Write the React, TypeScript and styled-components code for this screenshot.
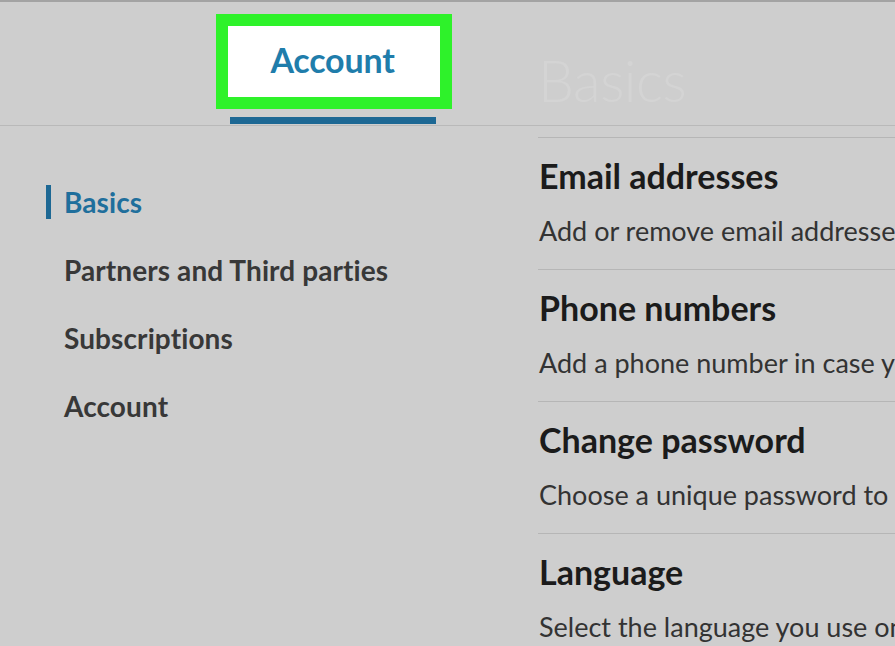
import React from 'react';
import styled, { createGlobalStyle } from 'styled-components';

const GlobalStyle = createGlobalStyle`
  html, body {
    margin: 0;
    padding: 0;
    background: #cecece;
    overflow: hidden;
  }
  body {
    font-family: Lato, "Liberation Sans", sans-serif;
  }
`;

const Page = styled.div`
  width: 895px;
  height: 646px;
  border-top: 2px solid #a3a3a3;
  box-sizing: border-box;
  overflow: hidden;
`;

const Header = styled.div`
  display: grid;
  grid-template-columns: 538px 1fr;
  height: 123px;
  border-bottom: 1px solid #b9b9b9;
`;

const TabCell = styled.div`
  padding: 12px 0 0 216px;
`;

const TabWrap = styled.div`
  width: 236px;
  display: flex;
  flex-direction: column;
`;

const Highlight = styled.div`
  box-sizing: border-box;
  width: 236px;
  height: 95px;
  border: 12px solid #2ef22a;
  background: #ffffff;
  display: flex;
  align-items: center;
  justify-content: center;
  padding: 0 3px 4px 0;
`;

const TabLabel = styled.span`
  font-size: 34px;
  font-weight: 700;
  color: #1f7dab;
  letter-spacing: -0.2px;
`;

const TabUnderline = styled.div`
  margin: 8px 0 0 14px;
  width: 206px;
  height: 7px;
  background: #1d6894;
`;

const PageTitle = styled.h1`
  margin: 0;
  padding: 50px 0 0 0;
  font-size: 57px;
  font-weight: 300;
  color: #d4d4d4;
  line-height: 1;
  letter-spacing: -0.5px;
`;

const Body = styled.div`
  display: grid;
  grid-template-columns: 538px 1fr;
`;

const Nav = styled.nav`
  display: flex;
  flex-direction: column;
  padding-top: 59px;
`;

const NavItem = styled.div<{ $active?: boolean }>`
  margin-left: 46px;
  margin-bottom: 34px;
  padding-left: 13px;
  height: 34px;
  display: flex;
  align-items: center;
  border-left: 5px solid ${p => (p.$active ? '#1d6894' : 'transparent')};
  font-size: 28px;
  font-weight: 700;
  color: ${p => (p.$active ? '#1f6f9c' : '#383838')};
  white-space: nowrap;
  letter-spacing: 0.1px;
`;

const Content = styled.div`
  padding-top: 11px;
`;

const Section = styled.section`
  border-top: 1px solid #b6b6b6;
  padding: 20px 0 22px 1px;
`;

const SectionTitle = styled.h2`
  margin: 0;
  font-size: 34px;
  line-height: 36px;
  font-weight: 700;
  color: #1b1b1b;
  white-space: nowrap;
`;

const SectionText = styled.p`
  margin: 21px 0 0;
  font-size: 27px;
  line-height: 32px;
  font-weight: 400;
  color: #333333;
  white-space: nowrap;
`;

const navItems = ['Basics', 'Partners and Third parties', 'Subscriptions', 'Account'];

const sections = [
  { title: 'Email addresses', text: 'Add or remove email addresses' },
  { title: 'Phone numbers', text: 'Add a phone number in case you' },
  { title: 'Change password', text: 'Choose a unique password to protect' },
  { title: 'Language', text: 'Select the language you use on' },
];

export default function App() {
  return (
    <Page>
      <GlobalStyle />
      <Header>
        <TabCell>
          <TabWrap>
            <Highlight>
              <TabLabel>Account</TabLabel>
            </Highlight>
            <TabUnderline />
          </TabWrap>
        </TabCell>
        <PageTitle>Basics</PageTitle>
      </Header>
      <Body>
        <Nav>
          {navItems.map((item, i) => (
            <NavItem key={item} $active={i === 0}>
              {item}
            </NavItem>
          ))}
        </Nav>
        <Content>
          {sections.map(s => (
            <Section key={s.title}>
              <SectionTitle>{s.title}</SectionTitle>
              <SectionText>{s.text}</SectionText>
            </Section>
          ))}
        </Content>
      </Body>
    </Page>
  );
}
